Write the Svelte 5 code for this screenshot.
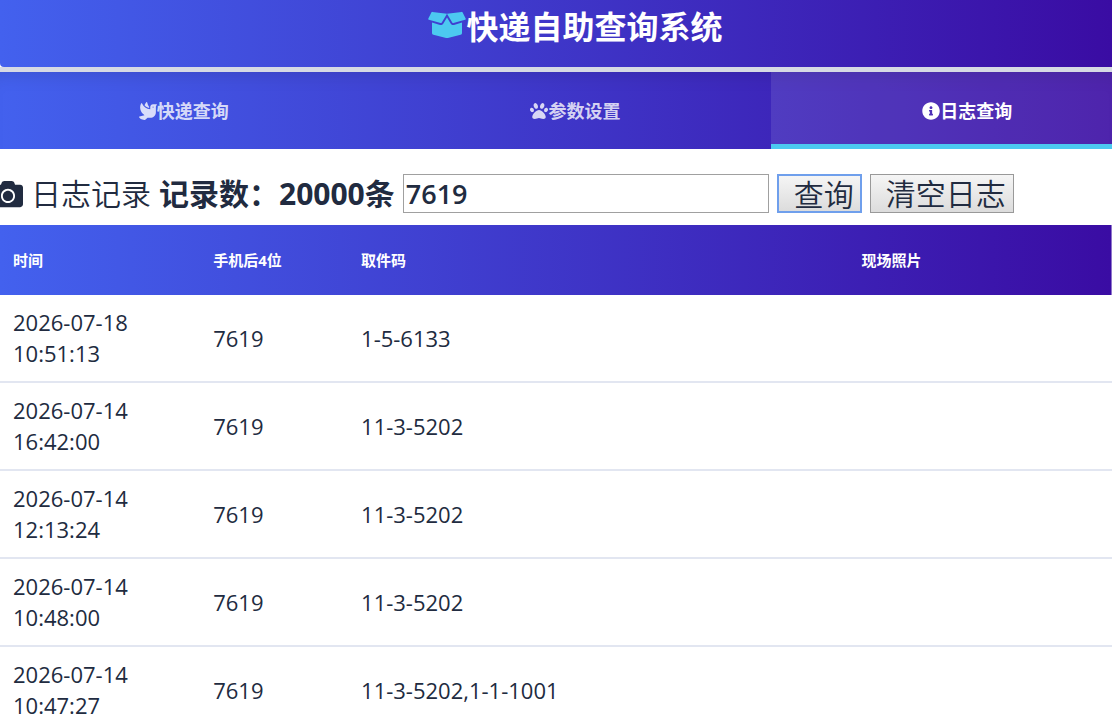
<script lang="ts">
    let activeTab = $state('logs')
    let keyword = $state('7619')
    let total = $state(20000)

    const tabs = [
        { id: 'query', label: '快递查询' },
        { id: 'settings', label: '参数设置' },
        { id: 'logs', label: '日志查询' }
    ]

    let logs = $state([
        { time: '2026-07-18 10:51:13', phone: '7619', code: '1-5-6133' },
        { time: '2026-07-14 16:42:00', phone: '7619', code: '11-3-5202' },
        { time: '2026-07-14 12:13:24', phone: '7619', code: '11-3-5202' },
        { time: '2026-07-14 10:48:00', phone: '7619', code: '11-3-5202' },
        { time: '2026-07-14 10:47:27', phone: '7619', code: '11-3-5202,1-1-1001' }
    ])

    let shown = $state('7619')
    let rows = $derived(logs.filter((log) => log.phone.includes(shown)))

    function search(event: SubmitEvent) {
        event.preventDefault()
        shown = keyword
    }

    function clearLogs() {
        logs = []
        total = 0
    }
</script>

<header class="banner">
    <h1>
        <svg class="box" viewBox="0 0 640 512" aria-hidden="true">
            <path d="M425.7 256c-16.9 0-32.800-9-41.400-23.400L320 126l-64.200 106.600c-8.700 14.500-24.600 23.500-41.500 23.500-4.500 0-9-.6-13.300-1.900L64 215v178c0 14.700 10 27.500 24.200 31l216.200 54.100c10.200 2.500 20.900 2.500 31 0L551.800 424c14.200-3.600 24.200-16.400 24.200-31V215l-137 39.100c-4.300 1.300-8.800 1.900-13.300 1.900zm212.600-112.200L586.800 41c-3.100-6.200-9.800-9.800-16.700-8.900L320 64l91.700 152.100c3.800 6.300 11.400 9.300 18.500 7.300l197.900-56.500c9.900-2.900 14.700-13.900 10.200-23.100zM53.200 41L1.700 143.800c-4.600 9.200.3 20.200 10.100 23l197.900 56.500c7.100 2 14.700-1 18.500-7.300L320 64 69.800 32.100c-6.900-.8-13.500 2.700-16.600 8.900z" />
        </svg>
        <span>快递自助查询系统</span>
    </h1>
</header>

<nav class="tabs">
    <div class="tab-list">
        {#each tabs as tab (tab.id)}
            <button
                type="button"
                class="tab"
                class:active={activeTab === tab.id}
                onclick={() => (activeTab = tab.id)}
            >
                <svg viewBox="0 0 512 512" aria-hidden="true">
                    {#if tab.id === 'query'}
                        <path d="M288 167.200v-28.100c-28.200-36.300-47.100-79.300-54.100-125.200-2.100-13.500-19-18.800-27.800-8.300-21.100 24.900-37.700 54.100-48.900 86.500 34.200 38.300 80 64.600 130.800 75.100zM400 64c-44.200 0-80 35.900-80 80.100v59.400C215.600 197.300 127 133 87 41.800c-5.500-12.500-23.200-13.200-29-.9C41.400 76 32 115.200 32 156.600c0 70.800 34.100 136.900 85.100 185.900 13.200 12.700 26.100 23.200 38.900 32.800l-143.900 36C1.200 414-3.400 426.400 2.600 435.700 20 462.600 63 508.200 155.800 512c8 .3 16-2.600 22.100-7.900l65.200-56.100H320c88.400 0 160-71.500 160-159.900V128l32-64H400zm0 96.100c-8.800 0-16-7.200-16-16s7.200-16 16-16 16 7.200 16 16-7.200 16-16 16z" />
                    {:else if tab.id === 'settings'}
                        <path d="M256 224c-79.400 0-192 122.800-192 200.200C64 459.100 90.800 480 135.800 480c48.900 0 81.200-25.100 120.200-25.100 39.300 0 71.800 25.100 120.200 25.100 45 0 71.800-20.900 71.800-55.800C448 346.800 335.400 224 256 224zm-147.300-12.600c-10.400-34.700-42.400-57.100-71.500-50.100S-7 202.300 3.300 236.900s42.400 57.100 71.500 50.100 44.300-41 33.900-75.600zm84.100-20.800c30.900-8.100 43.500-50.100 28.100-93.900S168 24.100 137.100 32.200s-43.500 50.100-28.100 93.900 52.900 72.500 83.800 64.500zm282-29.300c-29.100-7-61.100 15.400-71.500 50.100s4.800 68.500 33.900 75.600 61.100-15.400 71.500-50.100-4.800-68.600-33.900-75.600zm-155.600 29.300c30.900 8.100 68.400-20.700 83.800-64.500s2.800-85.800-28.100-93.900-68.400 20.700-83.800 64.500-2.800 85.800 28.100 93.900z" />
                    {:else}
                        <path d="M256 8C119 8 8 119.100 8 256s111 248 248 248 248-111 248-248S393 8 256 8zm0 110c23.200 0 42 18.800 42 42s-18.800 42-42 42-42-18.800-42-42 18.800-42 42-42zm56 254c0 6.600-5.400 12-12 12h-88c-6.600 0-12-5.400-12-12v-24c0-6.600 5.400-12 12-12h12v-64h-12c-6.600 0-12-5.400-12-12v-24c0-6.600 5.400-12 12-12h64c6.600 0 12 5.400 12 12v100h12c6.600 0 12 5.400 12 12v24z" />
                    {/if}
                </svg>
                <span>{tab.label}</span>
            </button>
        {/each}
    </div>
</nav>

<main>
    <form class="toolbar" onsubmit={search}>
        <svg class="camera" viewBox="0 0 512 512" aria-hidden="true">
            <path d="M512 144v288c0 26.500-21.500 48-48 48H48c-26.500 0-48-21.500-48-48V144c0-26.500 21.500-48 48-48h88l12.300-32.900c7-18.700 24.900-31.100 44.900-31.100h125.500c20 0 37.900 12.400 44.900 31.100L376 96h88c26.500 0 48 21.500 48 48zM376 288c0-66.200-53.800-120-120-120s-120 53.800-120 120 53.800 120 120 120 120-53.800 120-120zm-32 0c0 48.500-39.500 88-88 88s-88-39.500-88-88 39.500-88 88-88 88 39.500 88 88z" />
        </svg>
        <span class="caption">日志记录</span>
        <label for="keyword">记录数：{total}条</label>
        <input id="keyword" type="text" bind:value={keyword} />
        <button type="submit" class="focused">查询</button>
        <button type="button" onclick={clearLogs}>清空日志</button>
    </form>

    <table>
        <thead>
            <tr>
                <th class="time">时间</th>
                <th class="phone">手机后4位</th>
                <th class="code">取件码</th>
                <th>现场照片</th>
            </tr>
        </thead>
        <tbody>
            {#each rows as log (log.time)}
                <tr>
                    <td><div class="stamp">{log.time}</div></td>
                    <td>{log.phone}</td>
                    <td>{log.code}</td>
                    <td></td>
                </tr>
            {/each}
        </tbody>
    </table>
</main>

<style>
    :global(body) {
        background: #fff;
        color: #212b40;
        font-family: 'Open Sans', 'Noto Sans CJK SC', sans-serif;
        overflow-x: hidden;
        scrollbar-width: none;
    }

    svg {
        fill: currentColor;
        flex: none;
    }

    .banner {
        background: linear-gradient(90deg, #4361ee, #3a0ca3);
        border-bottom-left-radius: 4px;
        padding: 3px 0 16px 39px;
    }

    h1 {
        align-items: center;
        color: #fff;
        display: flex;
        font-size: 32px;
        font-weight: 700;
        justify-content: center;
        line-height: 48px;
        margin: 0;
    }

    .box {
        color: #4cc9f0;
        height: 30px;
        margin-bottom: 4px;
        width: 38px;
    }

    .tabs {
        background: linear-gradient(90deg, #4361ee, #3a0ca3);
        border-top: 5px solid #d6dae4;
        box-shadow: inset 0 16px 20px -16px rgba(0, 0, 0, 0.15);
        overflow: hidden;
    }

    /* the strip bleeds past both edges of the window */
    .tab-list {
        display: grid;
        grid-template-columns: repeat(3, 1fr);
        margin: 0 -51px 0 -12px;
    }

    .tab {
        align-items: center;
        background: none;
        border: 0;
        border-bottom: 5px solid transparent;
        color: rgba(255, 255, 255, 0.8);
        cursor: pointer;
        display: flex;
        font-family: inherit;
        font-size: 18px;
        font-weight: 700;
        justify-content: center;
        line-height: 24px;
        padding: 27px 0 21px;
    }

    .tab svg {
        height: 18px;
        width: 18px;
    }

    .tab.active {
        background: rgba(255, 255, 255, 0.1);
        border-bottom-color: #4cc9f0;
        color: #fff;
    }

    .toolbar {
        align-items: center;
        display: flex;
        font-size: 30px;
        font-weight: 350;
        gap: 8px;
        line-height: 37px;
        padding: 25px 0 12px;
    }

    .camera {
        height: 30px;
        margin-left: -7px;
        width: 30px;
    }

    .caption,
    label {
        white-space: nowrap;
    }

    label {
        font-weight: 700;
    }

    .toolbar input {
        border: 1px solid #a0a0a0;
        box-sizing: border-box;
        color: inherit;
        flex: 0 1 366px;
        font-family: inherit;
        font-size: 27px;
        font-weight: 600;
        height: 39px;
        min-width: 0;
        padding: 0 2px;
    }

    .toolbar button {
        background: linear-gradient(#f5f5f5, #dcdcdc);
        border: 1px solid #999;
        box-sizing: border-box;
        color: inherit;
        flex: none;
        font: inherit;
        height: 39px;
        padding: 0 7px 0 15px;
    }

    .toolbar .focused {
        border: 2px solid #6f9fec;
        padding: 0 6px 0 15px;
    }

    table {
        border-spacing: 0;
        table-layout: fixed;
        width: 100%;
    }

    thead {
        background: linear-gradient(90deg, #4361ee, #3a0ca3);
        color: #fff;
    }

    th {
        font-size: 15px;
        font-weight: 700;
        line-height: 22px;
        padding: 24px 12px;
        text-align: left;
    }

    .time {
        width: 18%;
    }

    .phone {
        width: 13.3%;
    }

    .code {
        width: 45%;
    }

    th,
    td {
        box-sizing: border-box;
        padding-left: 13px;
    }

    td {
        border-bottom: 2px solid #e2e6f1;
        font-size: 22px;
        line-height: 31px;
        padding-bottom: 12px;
        padding-top: 12px;
    }

    .stamp {
        max-width: 140px;
    }
</style>
